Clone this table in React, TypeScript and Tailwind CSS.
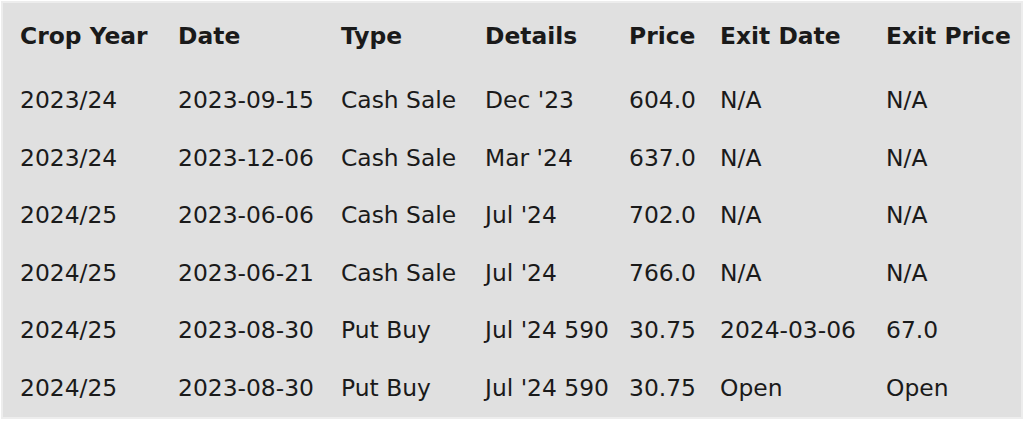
const headers = ['Crop Year', 'Date', 'Type', 'Details', 'Price', 'Exit Date', 'Exit Price']

const rows = [
  ['2023/24', '2023-09-15', 'Cash Sale', "Dec '23", '604.0', 'N/A', 'N/A'],
  ['2023/24', '2023-12-06', 'Cash Sale', "Mar '24", '637.0', 'N/A', 'N/A'],
  ['2024/25', '2023-06-06', 'Cash Sale', "Jul '24", '702.0', 'N/A', 'N/A'],
  ['2024/25', '2023-06-21', 'Cash Sale', "Jul '24", '766.0', 'N/A', 'N/A'],
  ['2024/25', '2023-08-30', 'Put Buy', "Jul '24 590", '30.75', '2024-03-06', '67.0'],
  ['2024/25', '2023-08-30', 'Put Buy', "Jul '24 590", '30.75', 'Open', 'Open'],
]

const cols = 'grid grid-cols-[158px_163px_144px_144px_91px_166px_1fr] items-center pl-[17px]'

export default function App() {
  return (
    <div className="w-[1024px] h-[422px] bg-white p-[1px]">
      <div
        className="w-[1022px] border-[2px] border-[#ededed] bg-[#e0e0e0] text-[#1a1a1a] text-[23.4px] leading-none whitespace-nowrap"
        style={{ fontFamily: '"DejaVu Sans", sans-serif' }}
      >
        {/* Header */}
        <div className={`${cols} h-[69px] pb-[1px] font-bold`}>
          {headers.map((h) => (
            <span key={h}>{h}</span>
          ))}
        </div>

        {/* Body */}
        {rows.map((r, i) => (
          <div key={i} className={`${cols} h-[57.5px]`}>
            {r.map((c, j) => (
              <span key={j}>{c}</span>
            ))}
          </div>
        ))}
      </div>
    </div>
  )
}
